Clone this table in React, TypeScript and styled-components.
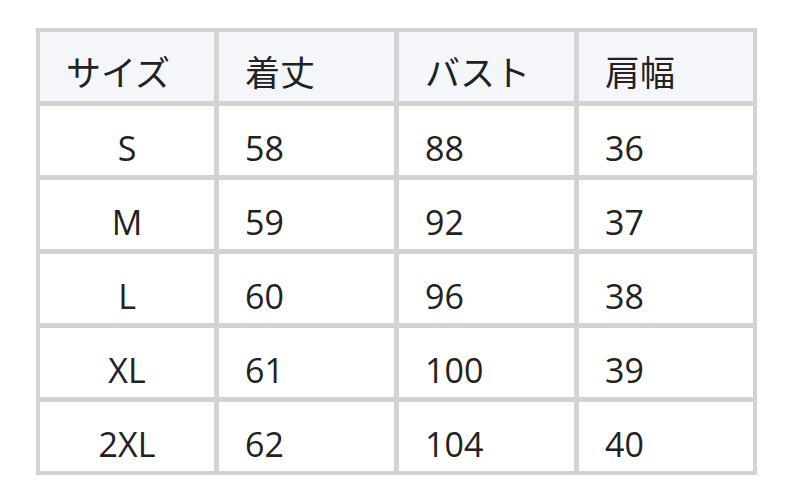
import React from "react";
import styled, { createGlobalStyle } from "styled-components";

const Global = createGlobalStyle`
  html, body { margin: 0; padding: 0; background: #ffffff; }
  body { font-family: "Open Sans", "Noto Sans CJK JP", sans-serif; }
`;

const Page = styled.div`
  width: 792px;
  height: 503px;
  padding: 28px 0 0 36px;
  box-sizing: border-box;
`;

const Table = styled.div`
  display: grid;
  grid-template-columns: 174px 175px 175px 174px;
  grid-auto-rows: 69px;
  gap: 5px;
  padding: 4px;
  width: 721px;
  box-sizing: border-box;
  background: #d3d3d3;
`;

const Cell = styled.div<{ $head?: boolean; $center?: boolean }>`
  display: flex;
  align-items: center;
  justify-content: ${(p) => (p.$center ? "center" : "flex-start")};
  padding-left: ${(p) => (p.$center ? "0" : "26px")};
  padding-top: ${(p) => (p.$head ? "12px" : "14px")};
  box-sizing: border-box;
  background: ${(p) => (p.$head ? "#f5f6fa" : "#ffffff")};
  color: #222222;
  font-size: ${(p) => (p.$head ? "35px" : "34px")};
  line-height: 1;
`;

const head = ["サイズ", "着丈", "バスト", "肩幅"];
const rows = [
  ["S", "58", "88", "36"],
  ["M", "59", "92", "37"],
  ["L", "60", "96", "38"],
  ["XL", "61", "100", "39"],
  ["2XL", "62", "104", "40"],
];

export default function App() {
  return (
    <>
      <Global />
      <Page>
        <Table>
          {head.map((h) => (
            <Cell key={h} $head>
              {h}
            </Cell>
          ))}
          {rows.map((r) =>
            r.map((v, i) => (
              <Cell key={r[0] + i} $center={i === 0}>
                {v}
              </Cell>
            ))
          )}
        </Table>
      </Page>
    </>
  );
}
